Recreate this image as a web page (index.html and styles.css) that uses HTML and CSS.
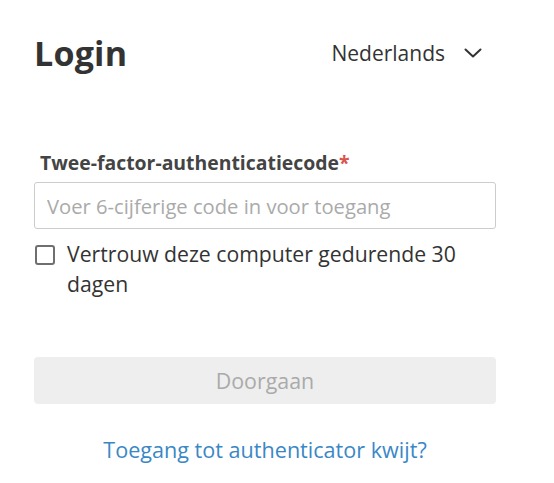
FILE: index.html
```html
<!DOCTYPE html>
<html>
<head>
<meta charset="utf-8">
<link rel="stylesheet" href="styles.css">
</head>
<body>
<div class="page">
  <header class="head">
    <h1 class="title">Login</h1>
    <div class="lang">
      <span class="lang-name">Nederlands</span>
      <svg class="chev" width="18" height="10" viewBox="0 0 18 10"><path d="M1.5 1.5 L9 8.5 L16.5 1.5" fill="none" stroke="#333" stroke-width="2" stroke-linecap="round" stroke-linejoin="round"/></svg>
    </div>
  </header>
  <form class="form">
    <label class="label">Twee-factor-authenticatiecode<span class="req">*</span></label>
    <input class="input" type="text" placeholder="Voer 6-cijferige code in voor toegang">
    <label class="check">
      <span class="box"></span>
      <span class="check-text">Vertrouw deze computer gedurende 30 dagen</span>
    </label>
    <button class="btn" type="button">Doorgaan</button>
    <a class="link" href="#">Toegang tot authenticator kwijt?</a>
  </form>
</div>
</body>
</html>
```
FILE: styles.css
```css
* { box-sizing: border-box; }
body { margin: 0; background: #fff; font-family: "Open Sans", "Noto Sans", sans-serif; color: #333; }
.page { width: 462px; margin-left: 34px; padding-top: 30px; }
.head { display: flex; justify-content: space-between; align-items: center; height: 46px; }
.title { margin: 0; font-size: 34px; font-weight: 700; color: #333; line-height: 46px; letter-spacing: 0.2px; }
.lang { display: flex; align-items: center; gap: 19px; padding-right: 14px; font-size: 21px; color: #333; }
.form { display: flex; flex-direction: column; padding-top: 75px; }
.label { font-size: 19.4px; font-weight: 700; color: #444; padding-left: 6px; line-height: 24px; margin-bottom: 7px; }
.req { color: #d9534f; }
.input { height: 47px; width: 100%; border: 1px solid #ccc; border-radius: 3px; padding: 0 12px; font-family: inherit; font-size: 20.2px; color: #333; }
.input::placeholder { color: #aaa; }
.check { display: flex; align-items: flex-start; gap: 12px; margin-top: 10px; font-size: 21.2px; line-height: 30px; color: #333; }
.box { flex: none; width: 20px; height: 20px; border: 2px solid #6f6f6f; border-radius: 3px; margin-top: 6px; margin-left: 1px; }
.check-text { width: 410px; }
.btn { margin-top: 58px; height: 47px; width: 100%; border: none; border-radius: 4px; background: #eee; color: #aaa; font-family: inherit; font-size: 21.4px; }
.link { margin-top: 33px; text-align: center; font-size: 21.6px; color: #3a87c6; text-decoration: none; line-height: 26px; }
```
